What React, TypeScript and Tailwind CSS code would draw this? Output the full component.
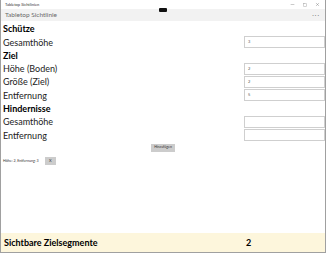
import { Minus, Square, X } from "lucide-react";

type FieldRowProps = {
  label: string;
  value?: string;
};

function SectionTitle({ children }: { children: string }) {
  return <div className="flex h-[13.3px] items-center pl-[2px] text-[9px] font-bold text-black">{children}</div>;
}

function FieldRow({ label, value }: FieldRowProps) {
  return (
    <div className="flex h-[13.3px] items-center justify-between">
      <span className="pl-[2px] text-[9px] text-[#222]">{label}</span>
      <div className="flex h-[12px] w-[81px] items-center border border-[#cfcfcf] bg-white pl-[3px] text-[4px] text-[#555]">
        {value}
      </div>
    </div>
  );
}

export default function App() {
  return (
    <div
      className="flex h-[253px] w-[326px] flex-col overflow-hidden border-x border-b border-[#a0a0a0] bg-white"
      style={{ fontFamily: 'Lato, "Noto Sans", sans-serif' }}
    >
      {/* window chrome */}
      <div className="relative flex h-[9px] items-center justify-between px-[4px]">
        <span className="text-[4px] leading-none text-[#333]">Tabletop Sichtlinien</span>
        <div className="flex items-center gap-[8px] pr-[1px] text-[#555]">
          <Minus size={5} strokeWidth={1.5} />
          <Square size={4} strokeWidth={1.5} />
          <X size={5} strokeWidth={1.5} />
        </div>
        <div className="absolute left-[158px] top-[8px] h-[4px] w-[8px] rounded-[1px] bg-[#111]" />
      </div>

      {/* app header */}
      <div className="flex h-[12px] items-center justify-between bg-[#f2f2f2] px-[4px]">
        <span className="text-[6.5px] text-[#6a6a6a]">Tabletop Sichtlinie</span>
        <span className="pr-[1px] text-[6px] leading-none tracking-[1px] text-[#777]">···</span>
      </div>

      <div className="flex flex-1 flex-col pt-[1.35px]">
        <SectionTitle>Schütze</SectionTitle>
        <FieldRow label="Gesamthöhe" value="3" />
        <SectionTitle>Ziel</SectionTitle>
        <FieldRow label="Höhe (Boden)" value="2" />
        <FieldRow label="Größe (Ziel)" value="2" />
        <FieldRow label="Entfernung" value="5" />
        <SectionTitle>Hindernisse</SectionTitle>
        <FieldRow label="Gesamthöhe" />
        <FieldRow label="Entfernung" />

        <div className="mt-[2px] flex justify-center">
          <button className="flex h-[8px] w-[24px] items-center justify-center bg-[#cccccc] text-[3.5px] text-[#333]">
            Hinzufügen
          </button>
        </div>

        <div className="mt-[5px] flex items-center gap-[6px] pl-[2px]">
          <span className="text-[3.6px] text-[#333]">Höhe: 2, Entfernung: 3</span>
          <button className="flex h-[8px] w-[11px] items-center justify-center bg-[#cccccc] text-[4px] text-[#333]">
            X
          </button>
        </div>

        <div className="mt-auto flex h-[19px] items-center bg-[#fdf6dc] text-[9px] font-bold text-black">
          <span className="w-[245px] pl-[3px]">Sichtbare Zielsegmente</span>
          <span>2</span>
        </div>
      </div>
    </div>
  );
}
